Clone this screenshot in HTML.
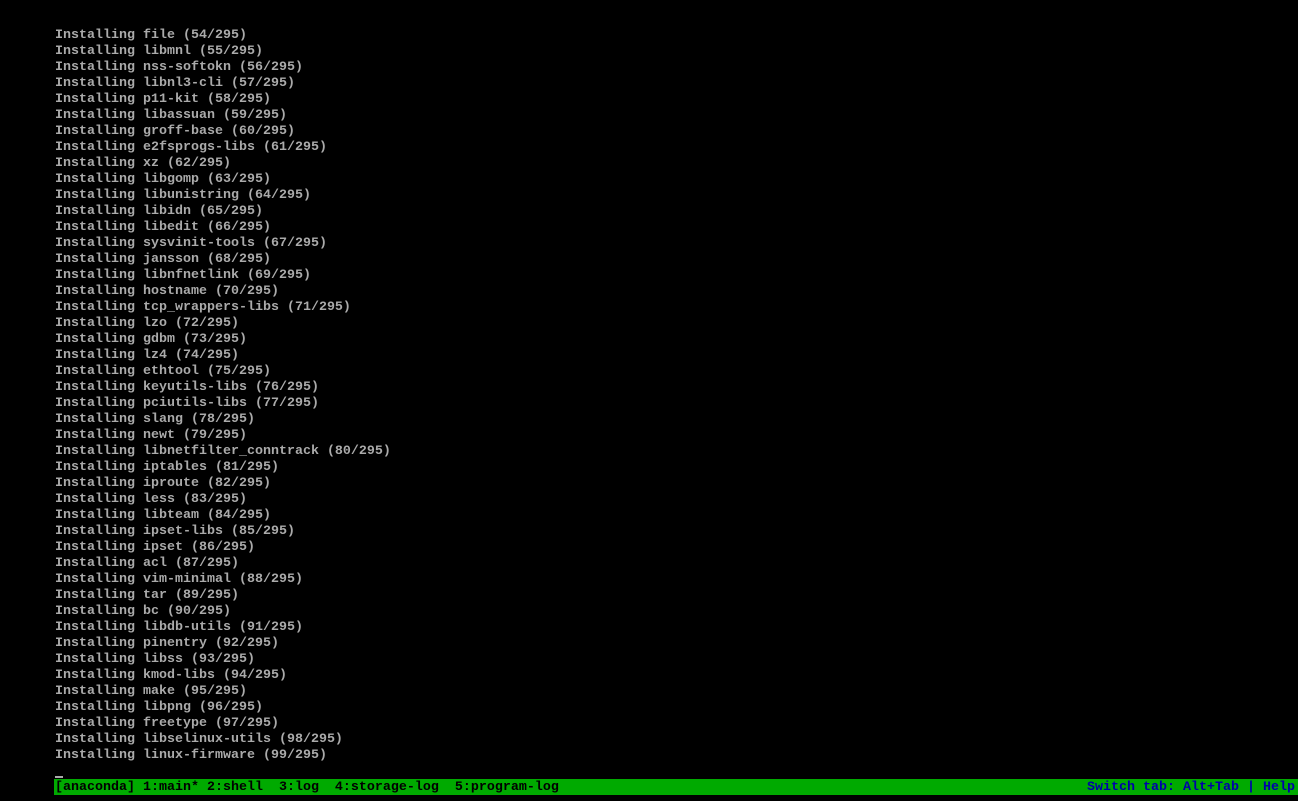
<!DOCTYPE html>
<html><head><style>
html,body{margin:0;padding:0;background:#000;width:1298px;height:801px;overflow:hidden}
pre{position:absolute;left:55px;top:28px;margin:0;font-family:"Liberation Mono",monospace;font-size:13.33px;line-height:16px;color:#aaa;font-weight:bold}
#bar{position:absolute;left:54px;top:779px;width:1244px;height:16px;background:#00aa00;font-family:"Liberation Mono",monospace;font-size:13.33px;line-height:18px;font-weight:bold;white-space:pre}
#l{position:absolute;left:1px;color:#000}
#r{position:absolute;right:3px;color:#0000aa}
#cur{position:absolute;left:55px;top:776px;width:8px;height:2px;background:#aaa}
</style></head><body>
<pre>Installing file (54/295)
Installing libmnl (55/295)
Installing nss-softokn (56/295)
Installing libnl3-cli (57/295)
Installing p11-kit (58/295)
Installing libassuan (59/295)
Installing groff-base (60/295)
Installing e2fsprogs-libs (61/295)
Installing xz (62/295)
Installing libgomp (63/295)
Installing libunistring (64/295)
Installing libidn (65/295)
Installing libedit (66/295)
Installing sysvinit-tools (67/295)
Installing jansson (68/295)
Installing libnfnetlink (69/295)
Installing hostname (70/295)
Installing tcp_wrappers-libs (71/295)
Installing lzo (72/295)
Installing gdbm (73/295)
Installing lz4 (74/295)
Installing ethtool (75/295)
Installing keyutils-libs (76/295)
Installing pciutils-libs (77/295)
Installing slang (78/295)
Installing newt (79/295)
Installing libnetfilter_conntrack (80/295)
Installing iptables (81/295)
Installing iproute (82/295)
Installing less (83/295)
Installing libteam (84/295)
Installing ipset-libs (85/295)
Installing ipset (86/295)
Installing acl (87/295)
Installing vim-minimal (88/295)
Installing tar (89/295)
Installing bc (90/295)
Installing libdb-utils (91/295)
Installing pinentry (92/295)
Installing libss (93/295)
Installing kmod-libs (94/295)
Installing make (95/295)
Installing libpng (96/295)
Installing freetype (97/295)
Installing libselinux-utils (98/295)
Installing linux-firmware (99/295)</pre>
<div id="cur"></div>
<div id="bar"><span id="l">[anaconda] 1:main* 2:shell  3:log  4:storage-log  5:program-log</span><span id="r">Switch tab: Alt+Tab | Help</span></div>
</body></html>
